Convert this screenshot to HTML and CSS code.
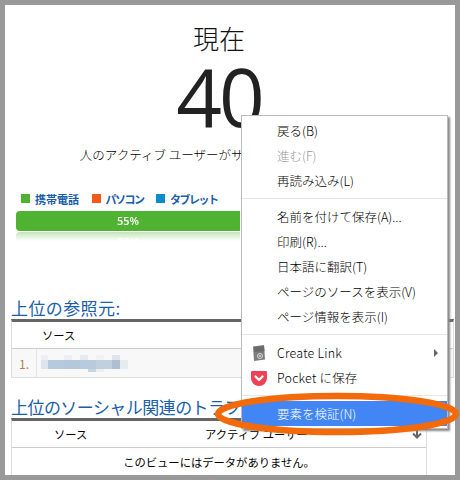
FILE: index.html
```html
<!DOCTYPE html>
<html lang="ja">
<head>
    <meta charset="UTF-8">
    <title>現在</title>
    <link rel="stylesheet" href="styles.css">
</head>
<body>
    <div class="frame">
        <div class="page">
            <div class="now">
                <div class="now-title">現在</div>
                <div class="now-count">40</div>
                <div class="now-text">人のアクティブ ユーザーがサイトを表示しています</div>
            </div>

            <div class="legend">
                <span class="legend-item"><i class="swatch green"></i>携帯電話</span>
                <span class="legend-item kana"><i class="swatch orange"></i>パソコン</span>
                <span class="legend-item kana"><i class="swatch blue"></i>タブレット</span>
            </div>
            <div class="bar">
                <div class="bar-fill">55%</div>
                <div class="bar-rest"></div>
            </div>

            <h2 class="section-title first">上位の参照元:</h2>
            <table class="table referrers">
                <tr class="head"><th class="num"></th><th class="src-left">ソース</th></tr>
                <tr class="row">
                    <td class="num">1.</td>
                    <td>
                        <!-- blurred-out referrer name -->
                        <svg class="mosaic" width="87" height="17" viewBox="0 0 87 17">
                            <rect x="0" y="0" width="7" height="5" fill="#eceff3"/>
                            <rect x="23" y="0" width="8" height="5" fill="#eceff3"/>
                            <rect x="39" y="0" width="8" height="5" fill="#e6ebf0"/>
                            <rect x="55" y="0" width="8" height="5" fill="#f0f2f5"/>
                            <rect x="71" y="0" width="8" height="5" fill="#dfe5eb"/>
                            <rect x="0" y="5" width="7" height="9" fill="#dfe4ea"/>
                            <rect x="7" y="5" width="16" height="9" fill="#b6cade"/>
                            <rect x="23" y="5" width="16" height="9" fill="#b4c8da"/>
                            <rect x="39" y="5" width="16" height="9" fill="#b8cbde"/>
                            <rect x="55" y="5" width="16" height="9" fill="#c0d0de"/>
                            <rect x="71" y="5" width="8" height="9" fill="#aebfd2"/>
                            <rect x="79" y="5" width="8" height="9" fill="#e6ebf0"/>
                            <rect x="47" y="14" width="8" height="3" fill="#c8d4e0"/>
                            <rect x="55" y="14" width="8" height="3" fill="#eeeeee"/>
                        </svg>
                    </td>
                </tr>
            </table>

            <h2 class="section-title second">上位のソーシャル関連のトラフィック:</h2>
            <table class="table social">
                <tr class="head">
                    <th class="social-src">ソース</th>
                    <th class="social-users">
                        アクティブ ユーザー
                        <svg class="sort-arrow" width="12" height="10" viewBox="0 0 12 10">
                            <path d="M6 0v8M2 4.500l4 4 4-4" fill="none" stroke="#666" stroke-width="2"/>
                        </svg>
                    </th>
                </tr>
                <tr><td class="empty" colspan="2">このビューにはデータがありません。</td></tr>
            </table>
        </div>
    </div>

    <div class="menu">
        <div class="menu-group">
            <div class="menu-item">戻る(B)</div>
            <div class="menu-item disabled">進む(F)</div>
            <div class="menu-item">再読み込み(L)</div>
        </div>
        <div class="menu-group second">
            <div class="menu-item">名前を付けて保存(A)...</div>
            <div class="menu-item">印刷(R)...</div>
            <div class="menu-item">日本語に翻訳(T)</div>
            <div class="menu-item">ページのソースを表示(V)</div>
            <div class="menu-item">ページ情報を表示(I)</div>
        </div>
        <div class="menu-group second">
            <div class="menu-item latin">
                <svg class="menu-icon create-icon" width="12" height="16" viewBox="0 0 12 16">
                    <path d="M0 1.500l11-1.500 1 14.500-11 1.500z" fill="#7d7d7d"/>
                    <path d="M1 2l10-1 .5 5-10 1z" fill="#6a6a6a"/>
                    <circle cx="7" cy="11" r="2.500" fill="none" stroke="#d8d8d8" stroke-width="1"/>
                    <circle cx="7" cy="11" r="1" fill="#d8d8d8"/>
                </svg>
                Create Link
                <span class="arrow"></span>
            </div>
            <div class="menu-item latin">
                <svg class="menu-icon pocket-icon" width="16" height="15" viewBox="0 0 16 15">
                    <path d="M1 0h14a1 1 0 0 1 1 1v6a8 8 0 0 1-16 0v-6a1 1 0 0 1 1-1z" fill="#ee4056"/>
                    <path d="M4.500 5.500l3.500 3.500 3.500-3.500" fill="none" stroke="#fff" stroke-width="2.200" stroke-linecap="round" stroke-linejoin="round"/>
                </svg>
                Pocket に保存
            </div>
        </div>
        <div class="menu-group last">
            <div class="menu-item active">要素を検証(N)</div>
        </div>
    </div>

    <svg class="ring" width="246" height="50" viewBox="0 0 246 50">
        <ellipse cx="123" cy="24" rx="119" ry="18" fill="none" stroke="#f26a0a" stroke-width="6.500"/>
    </svg>
</body>
</html>
```

FILE: styles.css
```css
html, body {
    margin: 0;
    padding: 0;
}

body {
    position: relative;
    width: 460px;
    height: 480px;
    overflow: hidden;
    background-color: #fff;
    font-family: "Noto Sans CJK JP", "Open Sans", sans-serif;
    color: #222;
}

.frame {
    box-sizing: border-box;
    width: 460px;
    height: 480px;
    border: 5px solid #999;
    background-color: #fff;
    overflow: hidden;
}

.page {
    padding-left: 6px;
}

/* Active users */
.now {
    width: 428px;
    height: 184px;
    margin-left: -6px;
    text-align: center;
    white-space: nowrap;
}

.now-title {
    padding-top: 17px;
    font-size: 26px;
    font-weight: 300;
    line-height: 32px;
    color: #111;
}

.now-count {
    margin-top: 4px;
    font-family: "Open Sans", sans-serif;
    font-size: 80px;
    letter-spacing: -3px;
    line-height: 76px;
    color: #222;
}

.now-text {
    margin-top: 12px;
    padding-left: 10px;
    font-size: 12.500px;
    font-weight: 300;
    line-height: 18px;
    color: #000;
}

/* Device bar */
.legend {
    display: flex;
    gap: 12.500px;
    height: 19px;
    align-items: center;
    margin-left: 10px;
    font-size: 11px;
    font-weight: 700;
    color: #1b5ea8;
}

.legend-item {
    display: flex;
    align-items: center;
}

.legend-item.kana {
    letter-spacing: -1.500px;
}

.swatch {
    width: 9px;
    height: 9px;
    margin-right: 5px;
}

.swatch.green { background-color: #4fb331; }
.swatch.orange { background-color: #f2591b; }
.swatch.blue { background-color: #0a8ccc; }

.bar {
    display: flex;
    gap: 2px;
    width: 407px;
    height: 20px;
    margin-top: 3px;
    margin-left: 5px;
    -webkit-box-reflect: below 1px linear-gradient(transparent 55%, rgba(255, 255, 255, 0.35));
}

.bar-fill {
    width: 224px;
    background-color: #4fb331;
    border-radius: 4px 0 0 4px;
    color: #fff;
    font-family: "Open Sans", sans-serif;
    font-size: 11px;
    font-weight: 600;
    line-height: 20px;
    text-align: center;
}

.bar-rest {
    flex: 1;
    background-color: #f2591b;
}

/* Tables */
.section-title {
    height: 20px;
    margin: 0 0 1px;
    font-size: 17px;
    font-weight: 400;
    line-height: 20px;
    color: #1b5ea8;
    white-space: nowrap;
}

.section-title.first {
    margin-top: 67px;
    letter-spacing: 0.400px;
}

.section-title.second {
    letter-spacing: -0.550px;
}

.table {
    box-sizing: border-box;
    table-layout: fixed;
    border-collapse: separate;
    border-spacing: 0;
    border-top: 3px solid #666;
    border-left: 1px solid #ddd;
    border-right: 1px solid #ddd;
    font-size: 11.300px;
}

.table th {
    height: 26px;
    padding: 0;
    font-weight: 400;
    text-align: left;
    color: #000;
    border-bottom: 1px solid #ccc;
}

.table td {
    padding: 0;
}

.referrers {
    width: 443px;
    margin-bottom: 19px;
}

.row td {
    height: 28px;
    background-color: #f8f8f8;
    border-bottom: 1px solid #ddd;
}

.table .num {
    box-sizing: border-box;
    width: 25px;
    text-align: center;
    color: #a98550;
    font-size: 12px;
}

.table td.num {
    border-right: 1px solid #e4e4e4;
}

.table .src-left {
    padding-left: 5px;
}

.mosaic {
    display: block;
    margin-left: 4px;
}

.social {
    width: 416px;
}

.table .social-src {
    box-sizing: border-box;
    width: 193px;
    padding-left: 42px;
}

.sort-arrow {
    float: right;
    margin: 3px 3px 0 0;
}

.table .empty {
    height: 40px;
    line-height: 28px;
    color: #000;
    text-align: center;
    vertical-align: top;
}

/* Context menu */
.menu {
    position: absolute;
    left: 241px;
    top: 115px;
    width: 207px;
    height: 314px;
    box-sizing: border-box;
    background-color: #fff;
    border: 1px solid #bbb;
    box-shadow: 2px 2px 2px #888;
    font-size: 12.500px;
    font-weight: 300;
    color: #000;
}

.menu-group {
    padding: 3px 0 4px;
    border-bottom: 1px solid #e6e6e6;
}

.menu-group.second {
    padding-top: 6px;
}

.menu-group.last {
    padding: 5px 0 0;
    border-bottom: none;
}

.menu-item {
    position: relative;
    height: 25px;
    padding-left: 35px;
    line-height: 24px;
    white-space: nowrap;
}

.menu-item.latin {
    letter-spacing: 0.200px;
}

.menu-item.disabled {
    color: #999;
}

.menu-item.active {
    background-color: #4285f4;
    color: #fff;
    line-height: 25px;
}

.menu-icon {
    position: absolute;
}

.create-icon {
    left: 11px;
    top: 4px;
}

.pocket-icon {
    left: 9px;
    top: 5px;
}

.arrow {
    position: absolute;
    right: 9px;
    top: 8px;
    border-left: 4px solid #666;
    border-top: 4px solid transparent;
    border-bottom: 4px solid transparent;
}

.ring {
    position: absolute;
    left: 214px;
    top: 390px;
}
```
